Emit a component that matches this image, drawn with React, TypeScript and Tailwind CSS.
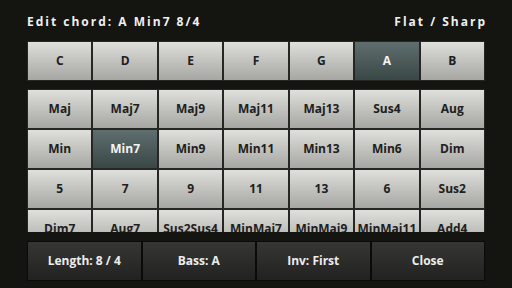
import React from "react";

const roots = ["C", "D", "E", "F", "G", "A", "B"];
const types = [
  "Maj", "Maj7", "Maj9", "Maj11", "Maj13", "Sus4", "Aug",
  "Min", "Min7", "Min9", "Min11", "Min13", "Min6", "Dim",
  "5", "7", "9", "11", "13", "6", "Sus2",
  "Dim7", "Aug7", "Sus2Sus4", "MinMaj7", "MinMaj9", "MinMaj11", "Add4",
];

function Key({ label, selected }: { label: string; selected?: boolean }) {
  return (
    <div
      className={
        "h-[40px] flex items-center justify-center border border-[#262624] text-[12px] font-bold " +
        (selected
          ? "bg-gradient-to-b from-[#5f6e6e] to-[#394747] text-[#f4f4f4]"
          : "bg-gradient-to-b from-[#dfdfdb] to-[#a6a6a2] text-[#202020]")
      }
    >
      {label}
    </div>
  );
}

function BottomBtn({ label }: { label: string }) {
  return (
    <div className="h-[40px] flex items-center justify-center border border-[#0a0a09] bg-gradient-to-b from-[#363634] to-[#222220] text-[12px] font-bold text-[#ececec]">
      {label}
    </div>
  );
}

export default function App() {
  return (
    <div
      className="w-[512px] h-[288px] bg-[#141410] flex flex-col px-[27px] overflow-hidden"
      style={{ fontFamily: '"Open Sans", "DejaVu Sans", sans-serif' }}
    >
      <div className="h-[41px] flex items-start justify-between pt-[13px] text-[12px] font-bold text-[#f0f0f0] tracking-[2px]">
        <span>Edit chord: A Min7 8/4</span>
        <span className="mr-[-2px]">Flat / Sharp</span>
      </div>
      <div className="grid grid-cols-7">
        {roots.map((r) => (
          <Key key={r} label={r} selected={r === "A"} />
        ))}
      </div>
      <div className="mt-[8px] h-[143px] overflow-hidden">
        <div className="grid grid-cols-7">
          {types.map((t) => (
            <Key key={t} label={t} selected={t === "Min7"} />
          ))}
        </div>
      </div>
      <div className="mt-[9px] grid grid-cols-4">
        {["Length: 8 / 4", "Bass: A", "Inv: First", "Close"].map((l) => (
          <BottomBtn key={l} label={l} />
        ))}
      </div>
    </div>
  );
}
